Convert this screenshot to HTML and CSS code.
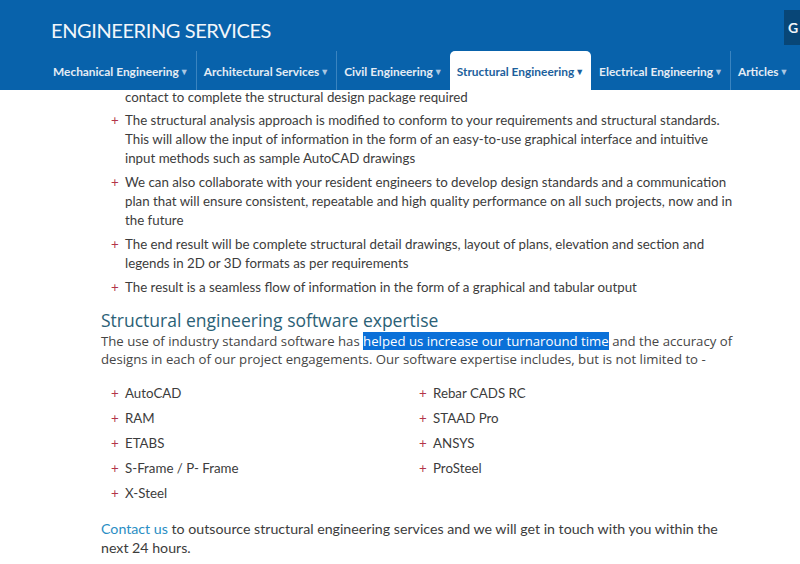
FILE: index.html
```html
<!DOCTYPE html>
<html lang="en">
  <head>
    <meta charset="UTF-8" />
    <meta name="viewport" content="width=device-width, initial-scale=1.0" />
    <title>Structural Engineering Services</title>
    <link rel="stylesheet" href="styles.css">
  </head>

  <body>
    <header class="site-header">
      <div class="header-top">
        <h1 class="site-title">ENGINEERING SERVICES</h1>
        <a class="get-quote" href="#">G</a>
      </div>
      <nav class="main-nav">
        <a class="nav-item" href="#">Mechanical Engineering<span class="caret">&#9660;</span></a>
        <a class="nav-item" href="#">Architectural Services <span class="caret">&#9660;</span></a>
        <a class="nav-item" href="#">Civil Engineering <span class="caret">&#9660;</span></a>
        <a class="nav-item active" href="#">Structural Engineering <span class="caret">&#9660;</span></a>
        <a class="nav-item" href="#">Electrical Engineering<span class="caret">&#9660;</span></a>
        <a class="nav-item" href="#">Articles <span class="caret">&#9660;</span></a>
      </nav>
    </header>

    <main class="content">
      <ul class="plus-list">
        <li class="continued">contact to complete the structural design package required</li>
        <li>The structural analysis approach is modified to conform to your requirements and structural standards. This will allow the input of information in the form of an easy-to-use graphical interface and intuitive input methods such as sample AutoCAD drawings</li>
        <li>We can also collaborate with your resident engineers to develop design standards and a communication plan that will ensure consistent, repeatable and high quality performance on all such projects, now and in the future</li>
        <li>The end result will be complete structural detail drawings, layout of plans, elevation and section and legends in 2D or 3D formats as per requirements</li>
        <li>The result is a seamless flow of information in the form of a graphical and tabular output</li>
      </ul>

      <h2 class="section-title">Structural engineering software expertise</h2>
      <p class="intro">The use of industry standard software has <span class="selected">helped us increase our turnaround time</span> and the accuracy of designs in each of our project engagements. Our software expertise includes, but is not limited to -</p>

      <ul class="plus-list software-list">
        <li>AutoCAD</li>
        <li>Rebar CADS RC</li>
        <li>RAM</li>
        <li>STAAD Pro</li>
        <li>ETABS</li>
        <li>ANSYS</li>
        <li>S-Frame / P- Frame</li>
        <li>ProSteel</li>
        <li>X-Steel</li>
      </ul>

      <p class="contact-line"><a href="#">Contact us</a> to outsource structural engineering services and we will get in touch with you within the next 24 hours.</p>
    </main>
  </body>
</html>
```

FILE: styles.css
```css
body {
  margin: 0;
  background-color: #ffffff;
  font-family: Lato, "Liberation Sans", sans-serif;
  color: #3c3c3c;
  overflow: hidden;
}

.site-header {
  background-color: #0862ab;
  height: 90px;
  display: flex;
  flex-direction: column;
}

.header-top {
  height: 51px;
  display: flex;
  justify-content: space-between;
  align-items: flex-start;
}

.site-title {
  margin: 18px 0 0 51px;
  font-size: 20px;
  font-weight: 400;
  color: #f2f6fa;
  letter-spacing: -0.4px;
}

.get-quote {
  margin-top: 10px;
  width: 12px;
  height: 35px;
  background-color: #084677;
  color: #f2f6fa;
  font-size: 14px;
  font-weight: 700;
  text-decoration: none;
  display: flex;
  align-items: center;
  padding-left: 4px;
  overflow: hidden;
}

.main-nav {
  display: flex;
  height: 39px;
  padding-left: 46px;
}

.nav-item {
  display: flex;
  align-items: center;
  padding: 1px 7px 0 7px;
  font-size: 11.9px;
  font-weight: 700;
  color: #e4ecf4;
  text-decoration: none;
  white-space: nowrap;
  border-left: 1px solid #3a84c0;
}

.nav-item:first-child {
  border-left: none;
}

.nav-item.active {
  background-color: #ffffff;
  color: #1d5f9c;
  border-left: none;
  border-radius: 5px 5px 0 0;
}

.nav-item.active + .nav-item {
  border-left: none;
  margin-left: 1px;
}

.caret {
  font-size: 9px;
  margin-left: 1px;
  color: #a9c6e2;
}

.nav-item.active .caret {
  color: #1d5f9c;
}

.content {
  padding: 0 62px 0 101px;
}

.plus-list {
  list-style: none;
  margin: 0;
  padding: 0 0 0 24px;
  font-size: 13.3px;
  line-height: 19px;
}

.plus-list li {
  position: relative;
  margin-bottom: 5px;
}

.plus-list li::before {
  content: "+";
  position: absolute;
  left: -14px;
  color: #b3344a;
}

.plus-list li.continued::before {
  content: none;
}

.plus-list li.continued {
  margin-top: -2px;
  margin-bottom: 4px;
}

.section-title {
  margin: 11px 0 0 0;
  font-family: "Open Sans", sans-serif;
  font-size: 17.5px;
  font-weight: 400;
  line-height: 24px;
  color: #2b6176;
}

.intro {
  margin: 0;
  font-family: "Open Sans", sans-serif;
  font-size: 13.2px;
  line-height: 18px;
  color: #464646;
}

.selected {
  background-color: #0a70d8;
  color: #ffffff;
}

.software-list {
  margin-top: 16px;
  display: grid;
  grid-template-columns: 295px 1fr;
  column-gap: 13px;
}

.software-list li {
  margin-bottom: 6px;
}

.contact-line {
  margin: 10px 0 0 0;
  font-size: 14.2px;
  line-height: 19px;
}

.contact-line a {
  color: #2a8ec4;
  text-decoration: none;
}
```
